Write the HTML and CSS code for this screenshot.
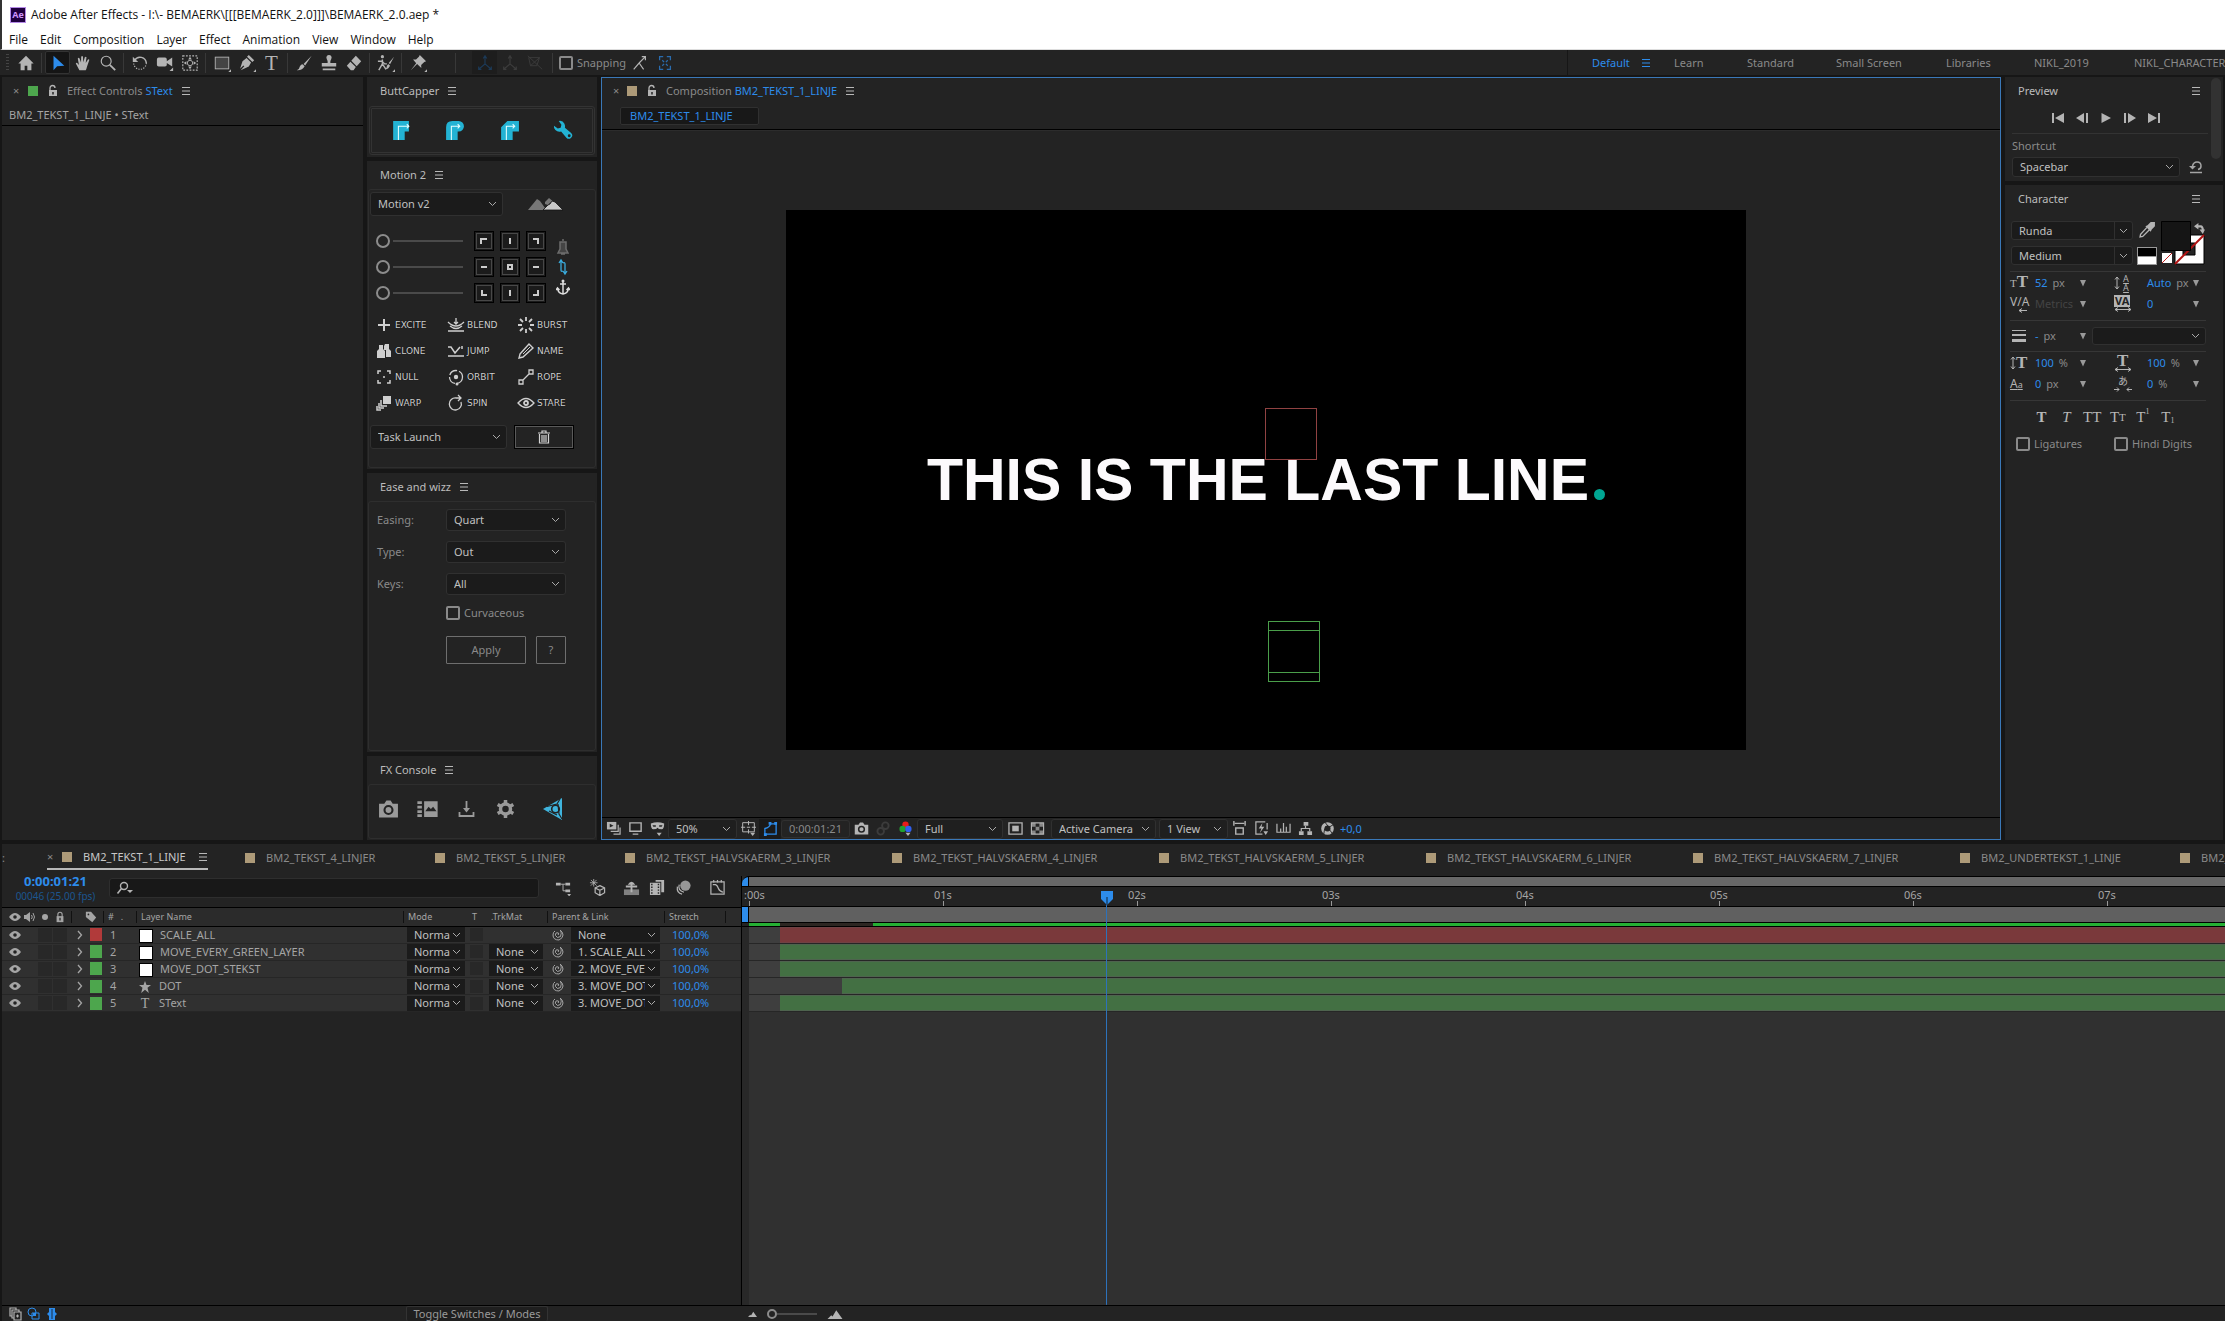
FILE: index.html
```html
<!DOCTYPE html>
<html lang="en">
<head>
<meta charset="utf-8">
<title>Adobe After Effects</title>
<link rel="stylesheet" href="styles.css">
</head>
<body>
<svg class="sprite" aria-hidden="true">
  <symbol id="menu" viewBox="0 0 10 10"><path d="M1 1.500h8M1 5h8M1 8.500h8" stroke="currentColor" stroke-width="1.200"/></symbol>
  <symbol id="home" viewBox="0 0 20 20"><path d="M10 2 1.500 10.500H4V18h4.500v-5h3v5H16v-7.500h2.500z" fill="currentColor"/></symbol>
  <symbol id="arrow" viewBox="0 0 20 20"><path d="M5 2v16l4-4.500 8-.5z" fill="currentColor"/></symbol>
  <symbol id="hand" viewBox="0 0 20 20"><path d="M6 18 2 10.500q.8-1.500 2.500.5l1 1.200L4.200 5q.8-1.600 2 0L7.800 9.500 8 3q1-1.700 2 0l.3 6.300L12 3.500q1.200-1.200 1.900.2L13 10l2.500-4q1.400-.8 1.500.7L14.500 14q-.5 2.500-1.500 4z" fill="currentColor"/></symbol>
  <symbol id="lens" viewBox="0 0 20 20"><circle cx="8" cy="8" r="5.500" fill="none" stroke="currentColor" stroke-width="1.300"/><path d="m12 12 6 6" stroke="currentColor" stroke-width="2"/></symbol>
  <symbol id="rotate" viewBox="0 0 20 20"><path d="M4 7A7 7 0 0 1 17 10" fill="none" stroke="currentColor" stroke-width="1.600"/><path d="M2 3v6h6z" fill="currentColor"/><path d="M17 10a7 7 0 0 1-14 0" fill="none" stroke="currentColor" stroke-width="1.300" stroke-dasharray="1.300 1.500"/></symbol>
  <symbol id="cam" viewBox="0 0 20 20"><path d="M1 6q0-2 2-2h7q2 0 2 2v2l6-4v10l-6-4v2q0 2-2 2H3q-2 0-2-2z" fill="currentColor"/><path d="M19 15v4h-4z" fill="currentColor"/></symbol>
  <symbol id="anchorpt" viewBox="0 0 20 20"><rect x="2" y="2" width="16" height="16" fill="none" stroke="currentColor" stroke-width="1.300" stroke-dasharray="2 1.500"/><circle cx="10" cy="10" r="3" fill="none" stroke="currentColor"/><path d="m10 3 2 3H8zM10 17l2-3H8zM3 10l3-2v4zM17 10l-3-2v4z" fill="currentColor"/></symbol>
  <symbol id="rect" viewBox="0 0 20 20"><rect x="2.500" y="3.500" width="15" height="13" fill="#444" stroke="currentColor"/><path d="M20 17v3h-3z" fill="currentColor"/></symbol>
  <symbol id="pen" viewBox="0 0 20 20"><path d="m12 1 6 6-2 2-6-6zM9.500 4.500l5 5L12 14 3 18l4-4.500-1-.800L2.300 16.500 5 8z" fill="currentColor"/><path d="M20 17v3h-3z" fill="currentColor"/></symbol>
  <symbol id="brush" viewBox="0 0 20 20"><path d="m18.500 2-9 9 1.800 1.800zM8.500 11.500l2.200 2.200Q8 18.500 2 18q3-1.500 3.500-4.500 1-2 3-2z" fill="currentColor"/></symbol>
  <symbol id="stamp" viewBox="0 0 20 20"><path d="M10 1a3 3 0 0 1 2.500 4.500Q11 8 11.500 10H18v4H2v-4h6.500Q9 8 7.500 5.500A3 3 0 0 1 10 1zM3 16h14v2H3z" fill="currentColor"/></symbol>
  <symbol id="eraser" viewBox="0 0 20 20"><path d="m12 2 6 6-5 5.500-6-6zM6 8.500l6 6L9.500 18h-3L2 13z" fill="currentColor"/></symbol>
  <symbol id="roto" viewBox="0 0 20 20"><circle cx="6" cy="3" r="1.800" fill="currentColor"/><path d="M1 8h4.500l3 3H11M6 6v5l-4 7M6 11l4 6" stroke="currentColor" stroke-width="1.600" fill="none"/><path d="m19 3-6 7 1.500 1.500zM12.500 11l2 2q-2 4-5 4 1.500-2 1.500-4z" fill="currentColor"/><path d="M20 17v3h-3z" fill="currentColor"/></symbol>
  <symbol id="pin" viewBox="0 0 20 20"><path d="m12 1 7 7-2 .8-3.500 3.500.2 3.200L9 11.200 2 18l6-7.800L4.500 6l3.300.2L11 3z" fill="currentColor"/><path d="M20 17v3h-3z" fill="currentColor"/></symbol>
  <symbol id="axis" viewBox="0 0 20 20"><path d="M10 3v8l-7 6M10 11l7 6M8 5l2-3 2 3M3 14v3h3M14 17h3v-3" fill="none" stroke="currentColor" stroke-width="1.300"/></symbol>
  <symbol id="axis2" viewBox="0 0 20 20"><path d="M3 4h12l-3 9H5zM2 2l16 15M5 13l10-9" fill="none" stroke="currentColor"/></symbol>
  <symbol id="snap" viewBox="0 0 20 20"><path d="m3 17 6-7 5 7M9 10l7-7M12 3h4v4" fill="none" stroke="currentColor" stroke-width="1.300"/></symbol>
  <symbol id="bounds" viewBox="0 0 20 20"><path d="M4 7V3h4M12 3h4v4M16 13v4h-4M8 17H4v-4M7 7l2 2M13 7l-2 2M7 13l2-2M13 13l-2-2" fill="none" stroke="currentColor" stroke-width="1.400"/></symbol>
  <symbol id="lock" viewBox="0 0 12 14"><path d="M3 7V4a2.500 2.500 0 0 1 5 0" fill="none" stroke="currentColor" stroke-width="1.300"/><path d="M2 6h8v6H2z" fill="currentColor"/><path d="M6 8v2.500" stroke="#232323" stroke-width="1.500"/></symbol>
  <symbol id="shut" viewBox="0 0 12 14"><path d="M3.500 7V4a2.500 2.500 0 0 1 5 0v3" fill="none" stroke="currentColor" stroke-width="1.300"/><path d="M2 6h8v7H2z" fill="currentColor"/><path d="M6 8v3" stroke="#232323" stroke-width="1.500"/></symbol>
  <symbol id="cap1" viewBox="0 0 20 20"><path d="M3 1h15v10h-4v8H3z" fill="#23b3d4"/><path d="M8 19V6h10M16 4l2 2-2 2" fill="none" stroke="#e8ffff"/></symbol>
  <symbol id="cap2" viewBox="0 0 20 20"><path d="M2 7q0-6 6-6h6a5 5 0 0 1 0 10h-1v8H2z" fill="#23b3d4"/><path d="M7 19V6h8M13 4l2 2-2 2" fill="none" stroke="#e8ffff"/></symbol>
  <symbol id="cap3" viewBox="0 0 20 20"><path d="M2 7l6-6h11v10h-6v8H2z" fill="#23b3d4"/><path d="M7 19V6h8M13 4l2 2-2 2" fill="none" stroke="#e8ffff"/></symbol>
  <symbol id="wrench" viewBox="0 0 22 22"><path d="M6 1q4-1 6 3 1 2.500.5 4l6.500 5.500a3.500 3.500 0 1 1-5 5L8.500 12Q5 13 2.500 10.500.5 8 1 6l4 3 3-1 .8-3z" fill="#23b3d4"/><circle cx="17" cy="16.500" r="1.500" fill="#232323"/></symbol>
  <symbol id="mount" viewBox="0 0 36 14"><path d="M1 13 10 2l3 2 5 7-1 2z" fill="#777"/><path d="M18 5l4-4 6 5-4-1-3 3-3-1z" fill="#777"/><path d="m16 13 5-5 2-1 2-3 3 1 8 8z" fill="#c8c8c8" stroke="#111" stroke-width=".8"/></symbol>
  <symbol id="bell" viewBox="0 0 14 18"><path d="M7 1v2M4 4h6v7l2 4H2l2-4zM5 16h4" fill="#444" stroke="#6c6c6c" stroke-width="1.500"/></symbol>
  <symbol id="swapv" viewBox="0 0 14 18"><path d="M5 3v9q0 2 2 1M9 15V6q0-2-2-1M3 5l2-3 2 3M7 13l2 3 2-3" fill="none" stroke="#3aabdc" stroke-width="1.300"/></symbol>
  <symbol id="anchor" viewBox="0 0 14 18"><path d="M7 2v14M4 6h6M1.500 10q.5 5.500 5.500 6 5-.5 5.500-6M0 12l1.500-2 2 2M10.500 12l2-2 1.500 2" fill="none" stroke="#ddd" stroke-width="1.500"/><circle cx="7" cy="3" r="1.500" fill="#ddd"/></symbol>
  <symbol id="p-plus" viewBox="0 0 18 18"><path d="M9 3v12M3 9h12" stroke="currentColor" stroke-width="2"/></symbol>
  <symbol id="p-clone" viewBox="0 0 18 18"><path d="M4 3h4v4l2 2v7H2V9l2-2zM10 2h4v5l2 2v6h-5V8H9V4z" fill="currentColor"/></symbol>
  <symbol id="p-null" viewBox="0 0 18 18"><path d="M3 6V3h3M12 3h3v3M15 12v3h-3M6 15H3v-3M8 9h2" fill="none" stroke="currentColor" stroke-width="1.500"/></symbol>
  <symbol id="p-warp" viewBox="0 0 18 18"><path d="M8 2h8v8H8z" fill="currentColor"/><path d="M6 6v6h6M4 9v5h5M2 12v4h4" fill="none" stroke="currentColor" stroke-width="1.500"/></symbol>
  <symbol id="p-blend" viewBox="0 0 18 18"><path d="M9 2v6M7 6l2 2 2-2M1 6q8 8 16 0M3 10q6 5 12 0M1 15h16" fill="none" stroke="currentColor" stroke-width="1.300"/></symbol>
  <symbol id="p-jump" viewBox="0 0 18 18"><path d="M1 5h3l4 6 5-6M1 14h16M15 4v3" fill="none" stroke="currentColor" stroke-width="1.500"/></symbol>
  <symbol id="p-orbit" viewBox="0 0 18 18"><circle cx="9" cy="9" r="6.500" fill="none" stroke="currentColor" stroke-dasharray="9 2" stroke-width="1.300"/><circle cx="9" cy="9" r="2.200" fill="currentColor"/><circle cx="10" cy="16" r="1.500" fill="currentColor"/></symbol>
  <symbol id="p-spin" viewBox="0 0 18 18"><path d="M14 8a6 6 0 1 1-5-4h5M11 1l3 3-3 3" fill="none" stroke="currentColor" stroke-width="1.300"/></symbol>
  <symbol id="p-burst" viewBox="0 0 18 18"><path d="M9 1v4M9 13v4M1 9h4M13 9h4M3 3l3 3M12 12l3 3M15 3l-3 3M6 12l-3 3" stroke="currentColor" stroke-width="1.800"/></symbol>
  <symbol id="p-name" viewBox="0 0 18 18"><path d="m3 12 9-10 4 4L6 15l-4 1z" fill="none" stroke="currentColor" stroke-width="1.400"/><path d="m6 12 7-7" stroke="currentColor"/></symbol>
  <symbol id="p-rope" viewBox="0 0 18 18"><path d="M2 12h4v4H2zM12 2h4v4h-4zM6 12l6-6" fill="none" stroke="currentColor" stroke-width="1.300"/></symbol>
  <symbol id="p-stare" viewBox="0 0 18 18"><path d="M1 9q8-9 16 0-8 9-16 0z" fill="none" stroke="currentColor" stroke-width="1.300"/><circle cx="9" cy="9" r="2" fill="none" stroke="currentColor" stroke-width="1.800"/></symbol>
  <symbol id="trash" viewBox="0 0 14 14"><path d="M1 3h12M5 2.500V1h4v1.500M2.500 4v9h9V4M5 5v7M7 5v7M9 5v7" fill="none" stroke="#d4d4d4" stroke-width="1.200"/></symbol>
  <symbol id="photo" viewBox="0 0 20 16"><path d="M1 3h5l2-3h4l2 3h5v13H1z" fill="currentColor"/><circle cx="10" cy="9" r="3.800" fill="none" stroke="#232323" stroke-width="2"/></symbol>
  <symbol id="film" viewBox="0 0 18 16"><path d="M6 1h12v14H6zM0 1h4v2.500H0zM0 5h4v2.500H0zM0 9h4v2.500H0zM0 12.700h4V15H0z" fill="currentColor"/><path d="m7 10 3-4 2 2 2-2 3 4z" fill="#232323"/></symbol>
  <symbol id="down" viewBox="0 0 18 18"><path d="M9 1v10M2 12v4h14v-4" fill="none" stroke="currentColor" stroke-width="1.800"/><path d="M5.500 8h7L9 12.500z" fill="currentColor"/></symbol>
  <symbol id="gear" viewBox="0 0 18 18"><circle cx="9" cy="9" r="5" fill="none" stroke="currentColor" stroke-width="3.500"/><path d="M9 0v4M9 14v4M1.200 4.500l3.500 2M13.300 11.500l3.500 2M16.800 4.500l-3.500 2M4.700 11.500l-3.500 2" stroke="currentColor" stroke-width="3.500"/></symbol>
  <symbol id="vc" viewBox="0 0 20 22"><path d="M0 11 19 0v22z" fill="#3fb4dd"/><path d="m4 8.500 10-2.500 3-5M15 6l1 10 3 5M14 17l-8-4" fill="none" stroke="#232323" stroke-width="1.200"/><circle cx="12.500" cy="11" r="3.800" fill="none" stroke="#232323" stroke-width="1.600"/></symbol>
  <symbol id="multi" viewBox="0 0 16 16"><path d="M1 1h10v8H1z" fill="currentColor"/><path d="m4 3 4 2-4 2z" fill="#232323"/><path d="M13 4v7H5M15 7v7H8" fill="none" stroke="currentColor" stroke-width="1.300"/></symbol>
  <symbol id="monitor" viewBox="0 0 16 16"><path d="M2 2h12v9H2zM5 14h6" fill="none" stroke="currentColor" stroke-width="1.500"/></symbol>
  <symbol id="mask" viewBox="0 0 18 18"><path d="M1 3q8-3 16 0 0 7-3 7-4 0-5-2-1 2-5 2-3 0-3-7z" fill="currentColor"/><path d="M3 5h4v2H4zM11 5h4l-1 2h-3z" fill="#232323"/><path d="M8 14h6l-3 4z" fill="currentColor"/></symbol>
  <symbol id="safe" viewBox="0 0 18 18"><path d="M2 2h14v11H2zM9 0v5M9 10v5M0 7.500h5M13 7.500h5M7 7.500h4" fill="none" stroke="currentColor" stroke-width="1.200"/><path d="M11 14h6l-3 4z" fill="currentColor"/></symbol>
  <symbol id="shape" viewBox="0 0 16 16"><path d="M2 14V8q5-1 6-5h6v11z" fill="none" stroke="currentColor" stroke-width="1.400"/><path d="M1 13h3v3H1zM12 1h3v3h-3zM6 1h3v3H6z" fill="currentColor"/></symbol>
  <symbol id="rgb" viewBox="0 0 16 18"><circle cx="8" cy="4.500" r="3.800" fill="#e81c1c"/><circle cx="4.500" cy="9.500" r="3.800" fill="#20a030"/><circle cx="11.500" cy="9.500" r="3.800" fill="#3060f0"/><path d="M8 14h6l-3 4z" fill="currentColor"/></symbol>
  <symbol id="ghost" viewBox="0 0 16 16"><circle cx="10" cy="5" r="3.500" fill="none" stroke="currentColor" stroke-width="2"/><circle cx="5" cy="11" r="3.500" fill="none" stroke="currentColor" stroke-width="2"/></symbol>
  <symbol id="roi" viewBox="0 0 16 16"><path d="M1 2h14v12H1z" fill="none" stroke="currentColor" stroke-width="1.400"/><path d="M4.500 5h7v6h-7z" fill="currentColor"/></symbol>
  <symbol id="check" viewBox="0 0 16 16"><path d="M1.500 2h13v12h-13z" fill="none" stroke="currentColor" stroke-width="1.200"/><path d="M2 2h4v4H2zM10 2h4v4h-4zM6 6h4v4H6zM2 10h4v4H2zM10 10h4v4h-4z" fill="currentColor" opacity=".7"/></symbol>
  <symbol id="par" viewBox="0 0 16 16"><path d="M2 0v5M14 0v5M3 2.500h10M4 7.500h8V14H4z" fill="none" stroke="currentColor" stroke-width="1.500"/></symbol>
  <symbol id="fast" viewBox="0 0 16 16"><path d="M12 1H2v13h7M14 2v7" fill="none" stroke="currentColor" stroke-width="1.300"/><path d="M9 2 5 8h3l-2 5 5-7H8zM10 11h5l-2.500 4z" fill="currentColor"/></symbol>
  <symbol id="tl" viewBox="0 0 16 16"><path d="M1 3v9h14V3M5 8v4M8 2v10M11 6v6" fill="none" stroke="currentColor" stroke-width="1.300"/></symbol>
  <symbol id="flow" viewBox="0 0 16 16"><path d="M6 1h5v4H6zM1 11h5v4H1zM10 11h5v4h-5z" fill="currentColor"/><path d="M8 5v3M3.500 11V8h9v3" fill="none" stroke="currentColor" stroke-width="1.300"/></symbol>
  <symbol id="expo" viewBox="0 0 16 16"><circle cx="8" cy="8" r="5" fill="none" stroke="currentColor" stroke-width="3.500"/><path d="m5 1 4 5M14 4l-5 3M13 13l-4-5M4 14l1-6" stroke="#232323"/></symbol>
  <symbol id="first" viewBox="0 0 12 10"><path d="M0 0h2v10H0zM12 0v10L3 5z" fill="currentColor"/></symbol>
  <symbol id="prev" viewBox="0 0 12 10"><path d="M8 0v10L0 5zM10 0h2v10h-2z" fill="currentColor"/></symbol>
  <symbol id="play" viewBox="0 0 12 10"><path d="M1.500 0v10L11 5z" fill="currentColor"/></symbol>
  <symbol id="next" viewBox="0 0 12 10"><path d="M4 0v10l8-5zM0 0h2v10H0z" fill="currentColor"/></symbol>
  <symbol id="last" viewBox="0 0 12 10"><path d="M10 0h2v10h-2zM0 0v10l9-5z" fill="currentColor"/></symbol>
  <symbol id="reset" viewBox="0 0 14 14"><path d="M3 6h4L3.500 9.500 0 6z" fill="currentColor"/><path d="M3.500 6q1-4 4.500-4 4 0 4 4 0 3-3 3.500M1 12.500h12" fill="none" stroke="currentColor" stroke-width="1.500"/></symbol>
  <symbol id="dropper" viewBox="0 0 16 16"><path d="m11 1 4 0 0 4-3 3-1 2-5-5 2-1z" fill="currentColor"/><path d="M7.500 6 1.500 12.500 1 15l2.500-.5L10 8" fill="none" stroke="currentColor" stroke-width="1.300"/></symbol>
  <symbol id="tri" viewBox="0 0 8 8"><path d="M1 1h6L4 7.500z" fill="currentColor"/></symbol>
  <symbol id="swap" viewBox="0 0 10 10"><path d="M3 3h3q2 0 2 4" fill="none" stroke="currentColor" stroke-width="2"/><path d="M4 0v6L0 3zM5 6h5l-2 4z" fill="currentColor"/></symbol>
  <symbol id="lines" viewBox="0 0 16 14"><path d="M1 1.500h14" stroke="currentColor"/><path d="M1 6h14" stroke="currentColor" stroke-width="2"/><path d="M1 11.500h14" stroke="currentColor" stroke-width="3"/></symbol>
  <symbol id="vspan" viewBox="0 0 6 14"><path d="M3 1v12M1 3.500 3 1l2 2.500M1 10.500 3 13l2-2.500" fill="none" stroke="currentColor"/></symbol>
  <symbol id="hspan" viewBox="0 0 18 5"><path d="M1 2.500h16M4 .5l-3 2 3 2M14 .5l3 2-3 2" fill="none" stroke="currentColor"/></symbol>
  <symbol id="hback" viewBox="0 0 18 5"><path d="M9 2.500h8M12 .5l-3 2 3 2" fill="none" stroke="currentColor"/></symbol>
  <symbol id="squeeze" viewBox="0 0 18 5"><path d="M0 2.500h5M3 .5l2 2-2 2M18 2.500h-5M15 .5l-2 2 2 2" fill="none" stroke="currentColor"/></symbol>
  <symbol id="search" viewBox="0 0 18 14"><circle cx="8" cy="5" r="3.500" fill="none" stroke="currentColor" stroke-width="1.400"/><path d="m5.500 7.500-4 5" stroke="currentColor" stroke-width="1.600"/><path d="M11 9h6l-3 3z" fill="currentColor"/></symbol>
  <symbol id="t-flow" viewBox="0 0 18 18"><path d="M1 4h5v3H1zM11 4h5v3h-5zM11 11h5v3h-5z" fill="currentColor"/><path d="M6 5.500h5M8.500 5.500v7h3" fill="none" stroke="currentColor"/><path d="M13 16h4l-2 2.500z" fill="currentColor"/></symbol>
  <symbol id="t-cube" viewBox="0 0 18 18"><path d="m11.500 7 5 2.500v5l-5 3-5-3v-5zM6.500 9.500l5 2.500 5-2.500M11.500 12v5" fill="none" stroke="currentColor" stroke-width="1.300"/><path d="M5 0v8M1 4h8M2 1l6 6M8 1 2 7" stroke="currentColor" stroke-width=".9"/></symbol>
  <symbol id="t-shy" viewBox="0 0 18 18"><path d="M1 11h16v6H1z" fill="currentColor" opacity=".65"/><path d="M5 6q4-6 8 0zM8 5h2v9H8zM3 7h12v2H3z" fill="currentColor"/></symbol>
  <symbol id="t-frame" viewBox="0 0 18 18"><path d="M1 4h11v13H1zM7 1h9v13h-3V3H7z" fill="currentColor"/><path d="M3 5v11M10 5v11" stroke="#232323" stroke-dasharray="1.500 1.500" stroke-width="1.500"/></symbol>
  <symbol id="t-blur" viewBox="0 0 18 18"><circle cx="11" cy="7" r="5.500" fill="currentColor" opacity=".8"/><path d="M4.500 6q-2 6 5 8M2.500 8q-1 7 5 8" fill="none" stroke="currentColor" stroke-width="1.300"/></symbol>
  <symbol id="t-graph" viewBox="0 0 18 18"><path d="M2 3h14v13H2zM5 1v3M9 1v3M13 1v3M4 6h3q2 1 3 4t5 4" fill="none" stroke="currentColor" stroke-width="1.300"/></symbol>
  <symbol id="eye" viewBox="0 0 12 10"><path d="M0 5q6-8 12 0-6 8-12 0z" fill="currentColor"/><circle cx="6" cy="5" r="1.800" fill="#222"/></symbol>
  <symbol id="speaker" viewBox="0 0 12 12"><path d="M0 4h2l4-3v10L2 8H0z" fill="currentColor"/><path d="M7.500 4q1.500 2 0 4M9 2q3 4 0 8" fill="none" stroke="currentColor"/></symbol>
  <symbol id="dot" viewBox="0 0 12 12"><circle cx="6" cy="6" r="3" fill="currentColor"/></symbol>
  <symbol id="tag" viewBox="0 0 14 14"><path d="M1 1h6l6 6.500L8.500 13 1 7z" fill="currentColor"/><circle cx="4" cy="4" r="1" fill="#232323"/></symbol>
  <symbol id="chev" viewBox="0 0 8 10"><path d="m2 1 3.500 4L2 9" fill="none" stroke="currentColor" stroke-width="1.300"/></symbol>
  <symbol id="star" viewBox="0 0 12 12"><path d="m6 0 1.500 4H12L8.500 6.800 9.800 12 6 8.800 2.200 12l1.300-5.200L0 4h4.500z" fill="currentColor"/></symbol>
  <symbol id="whip" viewBox="0 0 12 12"><path d="M6 6q1-1 .5-2Q3 3 3.500 6.500 5 10 8.500 7.500 10 4 8.500 1M8 1q3 2 3 5t-4 5Q1 11 1 6q0-3 2-4" fill="none" stroke="currentColor"/></symbol>
  <symbol id="f-copy" viewBox="0 0 14 14"><path d="M3 9H1V1h6v2M5 11H3V3h7v2M5 5h7v8H5zM7 9h3M8.500 7.500v3" fill="none" stroke="currentColor" stroke-width="1.200"/></symbol>
  <symbol id="f-mode" viewBox="0 0 14 14"><circle cx="5" cy="5" r="4" fill="none" stroke="currentColor"/><path d="M5 6h7v6H5z" fill="none" stroke="currentColor"/><path d="M6 6h3v3H6z" fill="currentColor"/></symbol>
  <symbol id="f-brace" viewBox="0 0 14 14"><path d="M4 1h6v4l2 2-2 2v4H4V9L2 7l2-2z" fill="currentColor"/><path d="M7 2v10" stroke="#1b2b40"/></symbol>
  <symbol id="hill" viewBox="0 0 12 8"><path d="M0 8l3-3 1 1 3-5 5 7z" fill="currentColor"/></symbol>
</svg>

<header class="chrome">
  <div class="title"><span class="logo">Ae</span><span>Adobe After Effects - I:\- BEMAERK\[[[BEMAERK_2.0]]]\BEMAERK_2.0.aep *</span></div>
  <nav class="menus"><a href="#">File</a><a href="#">Edit</a><a href="#">Composition</a><a href="#">Layer</a><a href="#">Effect</a><a href="#">Animation</a><a href="#">View</a><a href="#">Window</a><a href="#">Help</a></nav>
</header>

<div class="toolbar">
  <span class="grip"></span>
  <button class="tool" aria-label="Home"><svg><use href="#home"/></svg></button><i class="sep"></i>
  <button class="tool on" aria-label="Selection"><svg><use href="#arrow"/></svg></button>
  <button class="tool" aria-label="Hand"><svg><use href="#hand"/></svg></button>
  <button class="tool" aria-label="Zoom"><svg><use href="#lens"/></svg></button><i class="sep"></i>
  <button class="tool" aria-label="Rotate"><svg><use href="#rotate"/></svg></button>
  <button class="tool" aria-label="Camera"><svg><use href="#cam"/></svg></button>
  <button class="tool" aria-label="Pan behind"><svg><use href="#anchorpt"/></svg></button><i class="sep"></i>
  <button class="tool" aria-label="Rectangle"><svg><use href="#rect"/></svg></button>
  <button class="tool" aria-label="Pen"><svg><use href="#pen"/></svg></button>
  <button class="tool type">T</button><i class="sep"></i>
  <button class="tool" aria-label="Brush"><svg><use href="#brush"/></svg></button>
  <button class="tool" aria-label="Clone stamp"><svg><use href="#stamp"/></svg></button>
  <button class="tool" aria-label="Eraser"><svg><use href="#eraser"/></svg></button><i class="sep"></i>
  <button class="tool" aria-label="Roto brush"><svg><use href="#roto"/></svg></button><i class="sep"></i>
  <button class="tool" aria-label="Puppet pin"><svg><use href="#pin"/></svg></button><i class="sep wide"></i>
  <button class="tool dim blue" aria-label="Local axis"><svg><use href="#axis"/></svg></button>
  <button class="tool dim" aria-label="World axis"><svg><use href="#axis"/></svg></button>
  <button class="tool dim" aria-label="View axis"><svg><use href="#axis2"/></svg></button><i class="sep after"></i>
  <label class="tick"><input type="checkbox">Snapping</label>
  <button class="tool snap" aria-label="Snap edges"><svg><use href="#snap"/></svg></button>
  <button class="tool lit" aria-label="Snap bounds"><svg><use href="#bounds"/></svg></button>
  <nav class="spaces"><a href="#" class="cur">Default<svg class="mi"><use href="#menu"/></svg></a><a href="#">Learn</a><a href="#">Standard</a><a href="#">Small Screen</a><a href="#">Libraries</a><a href="#">NIKL_2019</a><a href="#">NIKL_CHARACTER</a></nav>
</div>

<main class="work">
  <section class="panel">
    <h2 class="head lead"><span class="x">×</span><i class="chip green"></i><svg class="lk"><use href="#lock"/></svg><span class="soft">Effect Controls</span><span class="blue">SText</span><svg class="mi"><use href="#menu"/></svg></h2>
    <p class="crumb">BM2_TEKST_1_LINJE • SText</p>
  </section>

  <div class="stack">
    <section class="panel">
      <h2 class="head">ButtCapper<svg class="mi"><use href="#menu"/></svg></h2>
      <div class="frame caps">
        <button aria-label="Flat cap"><svg><use href="#cap1"/></svg></button>
        <button aria-label="Round cap"><svg><use href="#cap2"/></svg></button>
        <button aria-label="Bevel cap"><svg><use href="#cap3"/></svg></button>
        <button aria-label="Settings"><svg><use href="#wrench"/></svg></button>
      </div>
    </section>
    <section class="panel">
      <h2 class="head">Motion 2<svg class="mi"><use href="#menu"/></svg></h2>
      <div class="frame motion">
        <div class="line"><select class="sel big" aria-label="Preset"><option>Motion v2</option></select><svg class="mount"><use href="#mount"/></svg></div>
        <div class="rig">
          <div class="sliders"><input type="range" value="0" aria-label="Ease in"><input type="range" value="0" aria-label="Ease both"><input type="range" value="0" aria-label="Ease out"></div>
          <div class="nine">
            <button aria-label="Top left"><svg viewBox="0 0 8 8"><path d="M1 7V2h6"/></svg></button><button aria-label="Top"><svg viewBox="0 0 8 8"><path d="M4 1v6"/></svg></button><button aria-label="Top right"><svg viewBox="0 0 8 8"><path d="M1 2h5v5"/></svg></button>
            <button aria-label="Left"><svg viewBox="0 0 8 8"><path d="M1 4h6"/></svg></button><button aria-label="Center"><svg viewBox="0 0 8 8"><path d="M2 2h4v4H2z"/></svg></button><button aria-label="Right"><svg viewBox="0 0 8 8"><path d="M1 4h6"/></svg></button>
            <button aria-label="Bottom left"><svg viewBox="0 0 8 8"><path d="M2 1v5h5"/></svg></button><button aria-label="Bottom"><svg viewBox="0 0 8 8"><path d="M4 1v6"/></svg></button><button aria-label="Bottom right"><svg viewBox="0 0 8 8"><path d="M1 6h5V1"/></svg></button>
          </div>
          <div class="side"><svg><use href="#bell"/></svg><svg><use href="#swapv"/></svg><svg><use href="#anchor"/></svg></div>
        </div>
        <div class="acts">
          <button><svg><use href="#p-plus"/></svg>EXCITE</button><button><svg><use href="#p-blend"/></svg>BLEND</button><button><svg><use href="#p-burst"/></svg>BURST</button>
          <button><svg><use href="#p-clone"/></svg>CLONE</button><button><svg><use href="#p-jump"/></svg>JUMP</button><button><svg><use href="#p-name"/></svg>NAME</button>
          <button><svg><use href="#p-null"/></svg>NULL</button><button><svg><use href="#p-orbit"/></svg>ORBIT</button><button><svg><use href="#p-rope"/></svg>ROPE</button>
          <button><svg><use href="#p-warp"/></svg>WARP</button><button><svg><use href="#p-spin"/></svg>SPIN</button><button><svg><use href="#p-stare"/></svg>STARE</button>
        </div>
        <div class="line"><select class="sel big" aria-label="Task"><option>Task Launch</option></select><button class="bin" aria-label="Delete"><svg><use href="#trash"/></svg></button></div>
      </div>
    </section>
    <section class="panel grow">
      <h2 class="head">Ease and wizz<svg class="mi"><use href="#menu"/></svg></h2>
      <div class="frame ease">
        <label for="easing">Easing:</label><select id="easing" class="sel"><option>Quart</option></select>
        <label for="type">Type:</label><select id="type" class="sel"><option>Out</option></select>
        <label for="keys">Keys:</label><select id="keys" class="sel"><option>All</option></select>
        <label class="tick second"><input type="checkbox">Curvaceous</label>
        <div class="second pair"><button class="btn">Apply</button><button class="btn">?</button></div>
      </div>
    </section>
    <section class="panel">
      <h2 class="head">FX Console<svg class="mi"><use href="#menu"/></svg></h2>
      <div class="frame fx">
        <button aria-label="Snapshot"><svg><use href="#photo"/></svg></button><button aria-label="Gallery"><svg><use href="#film"/></svg></button><button aria-label="Save"><svg><use href="#down"/></svg></button><button aria-label="Settings"><svg><use href="#gear"/></svg></button><button class="vc" aria-label="Video Copilot"><svg><use href="#vc"/></svg></button>
      </div>
    </section>
  </div>

  <section class="panel comp">
    <h2 class="head lead"><span class="x">×</span><i class="chip"></i><svg class="lk"><use href="#lock"/></svg><span class="soft">Composition</span><span class="blue">BM2_TEKST_1_LINJE</span><svg class="mi"><use href="#menu"/></svg></h2>
    <div class="flowbar"><a href="#">BM2_TEKST_1_LINJE</a></div>
    <div class="viewer">
      <div class="canvas">
        <p class="caption">THIS IS THE LAST LINE<i class="stop"></i></p>
        <i class="null red"></i><i class="null grn"></i><i class="null grn low"></i>
      </div>
    </div>
    <div class="viewbar">
      <button aria-label="Always preview"><svg><use href="#multi"/></svg></button>
      <button aria-label="Primary viewer"><svg><use href="#monitor"/></svg></button>
      <button aria-label="3D glasses"><svg><use href="#mask"/></svg></button>
      <select class="sel w70" aria-label="Magnification"><option>50%</option></select>
      <button aria-label="Grid and guides"><svg><use href="#safe"/></svg></button>
      <button class="blue" aria-label="Mask visibility"><svg><use href="#shape"/></svg></button>
      <span class="time">0:00:01:21</span>
      <button aria-label="Take snapshot"><svg><use href="#photo"/></svg></button>
      <button class="faint" aria-label="Show snapshot"><svg><use href="#ghost"/></svg></button>
      <button aria-label="Channels"><svg><use href="#rgb"/></svg></button>
      <select class="sel w86" aria-label="Resolution"><option>Full</option></select>
      <button aria-label="Region of interest"><svg><use href="#roi"/></svg></button>
      <button aria-label="Transparency grid"><svg><use href="#check"/></svg></button>
      <select class="sel w104" aria-label="3D view"><option>Active Camera</option></select>
      <select class="sel w70" aria-label="View layout"><option>1 View</option></select>
      <button aria-label="Pixel aspect"><svg><use href="#par"/></svg></button>
      <button aria-label="Fast previews"><svg><use href="#fast"/></svg></button>
      <button aria-label="Timeline"><svg><use href="#tl"/></svg></button>
      <button aria-label="Flowchart"><svg><use href="#flow"/></svg></button>
      <button aria-label="Reset exposure"><svg><use href="#expo"/></svg></button>
      <span class="blue">+0,0</span>
    </div>
  </section>

  <div class="stack">
    <section class="panel preview">
      <h2 class="head">Preview<svg class="mi"><use href="#menu"/></svg></h2>
      <div class="transport"><button aria-label="First frame"><svg><use href="#first"/></svg></button><button aria-label="Previous frame"><svg><use href="#prev"/></svg></button><button aria-label="Play"><svg><use href="#play"/></svg></button><button aria-label="Next frame"><svg><use href="#next"/></svg></button><button aria-label="Last frame"><svg><use href="#last"/></svg></button></div>
      <label class="soft" for="shortcut">Shortcut</label>
      <div class="short"><select id="shortcut" class="sel"><option>Spacebar</option></select><button aria-label="Reset"><svg><use href="#reset"/></svg></button></div>
      <i class="scroll"></i>
    </section>
    <section class="panel grow char">
      <h2 class="head">Character<svg class="mi"><use href="#menu"/></svg></h2>
      <div class="fonts">
        <div class="faces"><select class="sel split" aria-label="Font family"><option>Runda</option></select><select class="sel split" aria-label="Font style"><option>Medium</option></select></div>
        <div class="picks"><svg class="drop"><use href="#dropper"/></svg><i class="bw"></i></div>
        <div class="colors">
          <svg viewBox="0 0 44 44"><path d="M14 14h29v29H14z" fill="#fff" stroke="#000"/><path d="M22 22h12v12H22z" fill="#232323" stroke="#000"/><path d="m14 43 29-29" stroke="#b01414" stroke-width="2"/><path d="M.5.500h29v29H.5z" fill="#151515" stroke="#000"/><path d="M1 32h10v10H1z" fill="#fff"/><path d="m1 42 10-10" stroke="#c02020"/></svg>
          <svg class="swap"><use href="#swap"/></svg>
        </div>
      </div>
      <div class="props">
        <span class="gl"><small>T</small><b>T</b></span><span><a href="#">52</a> px</span><svg class="tri"><use href="#tri"/></svg>
        <span class="gl lead-ic"><svg class="vs"><use href="#vspan"/></svg><span class="aa"><u>A</u><u>A</u></span></span><span><a href="#">Auto</a> px</span><svg class="tri"><use href="#tri"/></svg>
        <span class="gl sans">V/A<svg class="hs"><use href="#hback"/></svg></span><span class="off">Metrics</span><svg class="tri"><use href="#tri"/></svg>
        <span class="gl sans inv"><em>VA</em><svg class="hs"><use href="#hspan"/></svg></span><span><a href="#">0</a></span><svg class="tri"><use href="#tri"/></svg>
      </div>
      <div class="props stroke">
        <svg class="ln"><use href="#lines"/></svg><span><a href="#">-</a> px</span><svg class="tri"><use href="#tri"/></svg><select class="sel" aria-label="Stroke order"><option></option></select>
      </div>
      <div class="props">
        <span class="gl"><svg class="vs"><use href="#vspan"/></svg><b>T</b></span><span><a href="#">100</a> %</span><svg class="tri"><use href="#tri"/></svg>
        <span class="gl tall"><b>T</b><svg class="hs"><use href="#hspan"/></svg></span><span><a href="#">100</a> %</span><svg class="tri"><use href="#tri"/></svg>
        <span class="gl sans"><u>A</u><sup>a</sup></span><span><a href="#">0</a> px</span><svg class="tri"><use href="#tri"/></svg>
        <span class="gl jp">あ<svg class="hs"><use href="#squeeze"/></svg></span><span><a href="#">0</a> %</span><svg class="tri"><use href="#tri"/></svg>
      </div>
      <div class="styles"><button><b>T</b></button><button><i>T</i></button><button>TT</button><button>T<small>T</small></button><button>T<sup>1</sup></button><button>T<sub>1</sub></button></div>
      <div class="ticks"><label class="tick"><input type="checkbox">Ligatures</label><label class="tick"><input type="checkbox">Hindi Digits</label></div>
    </section>
  </div>
</main>

<section class="timeline">
  <nav class="tabs">
    <span class="prior">:</span>
    <a href="#" class="cur"><span class="x">×</span><i class="chip"></i>BM2_TEKST_1_LINJE<svg class="mi"><use href="#menu"/></svg></a>
    <a href="#" class="t1"><i class="chip"></i>BM2_TEKST_4_LINJER</a>
    <a href="#" class="t1"><i class="chip"></i>BM2_TEKST_5_LINJER</a>
    <a href="#" class="t2"><i class="chip"></i>BM2_TEKST_HALVSKAERM_3_LINJER</a>
    <a href="#" class="t2"><i class="chip"></i>BM2_TEKST_HALVSKAERM_4_LINJER</a>
    <a href="#" class="t2"><i class="chip"></i>BM2_TEKST_HALVSKAERM_5_LINJER</a>
    <a href="#" class="t2"><i class="chip"></i>BM2_TEKST_HALVSKAERM_6_LINJER</a>
    <a href="#" class="t2"><i class="chip"></i>BM2_TEKST_HALVSKAERM_7_LINJER</a>
    <a href="#" class="t3"><i class="chip"></i>BM2_UNDERTEKST_1_LINJE</a>
    <a href="#"><i class="chip"></i>BM2_UNDERTEKST_2_LINJER</a>
  </nav>
  <div class="split-view">
    <div class="layers">
      <div class="ctl">
        <div class="clock"><b>0:00:01:21</b><span>00046 (25.00 fps)</span></div>
        <label class="find"><svg><use href="#search"/></svg><input type="text" aria-label="Search layers"></label>
        <div class="sw"><button aria-label="Mini-flowchart"><svg><use href="#t-flow"/></svg></button><button aria-label="Draft 3D"><svg><use href="#t-cube"/></svg></button><button aria-label="Hide shy layers"><svg><use href="#t-shy"/></svg></button><button aria-label="Frame blending"><svg><use href="#t-frame"/></svg></button><button aria-label="Motion blur"><svg><use href="#t-blur"/></svg></button><button aria-label="Graph editor"><svg><use href="#t-graph"/></svg></button></div>
      </div>
      <table>
        <colgroup><col class="c-av"><col class="c-lab"><col class="c-num"><col class="c-name"><col class="c-mode"><col class="c-t"><col class="c-trk"><col class="c-par"><col class="c-str"><col></colgroup>
        <thead><tr><th><span class="av"><svg><use href="#eye"/></svg><svg><use href="#speaker"/></svg><svg><use href="#dot"/></svg><svg><use href="#shut"/></svg></span></th><th class="bar"><svg class="tag"><use href="#tag"/></svg></th><th class="bar num"># &nbsp; .</th><th class="bar">Layer Name</th><th class="bar">Mode</th><th>T</th><th>.TrkMat</th><th class="bar">Parent &amp; Link</th><th class="bar">Stretch</th><th class="bar"></th></tr></thead>
        <tbody>
          <tr><td><span class="av"><svg><use href="#eye"/></svg><i></i><i></i><i></i></span></td><td><span class="lab"><svg><use href="#chev"/></svg><i class="r"></i></span></td><td class="num">1</td><td class="name"><i class="box"></i>SCALE_ALL</td><td><select class="sel" aria-label="Mode"><option>Normal</option></select></td><td><i class="pt"></i></td><td></td><td><span class="par"><svg><use href="#whip"/></svg><select class="sel" aria-label="Parent"><option>None</option></select></span></td><td class="blue">100,0%</td><td></td></tr>
          <tr><td><span class="av"><svg><use href="#eye"/></svg><i></i><i></i><i></i></span></td><td><span class="lab"><svg><use href="#chev"/></svg><i></i></span></td><td class="num">2</td><td class="name"><i class="box"></i>MOVE_EVERY_GREEN_LAYER</td><td><select class="sel" aria-label="Mode"><option>Normal</option></select></td><td><i class="pt"></i></td><td><select class="sel" aria-label="Track matte"><option>None</option></select></td><td><span class="par"><svg><use href="#whip"/></svg><select class="sel" aria-label="Parent"><option>1. SCALE_ALL</option></select></span></td><td class="blue">100,0%</td><td></td></tr>
          <tr><td><span class="av"><svg><use href="#eye"/></svg><i></i><i></i><i></i></span></td><td><span class="lab"><svg><use href="#chev"/></svg><i></i></span></td><td class="num">3</td><td class="name"><i class="box"></i>MOVE_DOT_STEKST</td><td><select class="sel" aria-label="Mode"><option>Normal</option></select></td><td><i class="pt"></i></td><td><select class="sel" aria-label="Track matte"><option>None</option></select></td><td><span class="par"><svg><use href="#whip"/></svg><select class="sel" aria-label="Parent"><option>2. MOVE_EVERY_GREEN_LAYER</option></select></span></td><td class="blue">100,0%</td><td></td></tr>
          <tr><td><span class="av"><svg><use href="#eye"/></svg><i></i><i></i><i></i></span></td><td><span class="lab"><svg><use href="#chev"/></svg><i></i></span></td><td class="num">4</td><td class="name"><svg><use href="#star"/></svg>DOT</td><td><select class="sel" aria-label="Mode"><option>Normal</option></select></td><td><i class="pt"></i></td><td><select class="sel" aria-label="Track matte"><option>None</option></select></td><td><span class="par"><svg><use href="#whip"/></svg><select class="sel" aria-label="Parent"><option>3. MOVE_DOT_STEKST</option></select></span></td><td class="blue">100,0%</td><td></td></tr>
          <tr><td><span class="av"><svg><use href="#eye"/></svg><i></i><i></i><i></i></span></td><td><span class="lab"><svg><use href="#chev"/></svg><i></i></span></td><td class="num">5</td><td class="name"><span class="ty">T</span>SText</td><td><select class="sel" aria-label="Mode"><option>Normal</option></select></td><td><i class="pt"></i></td><td><select class="sel" aria-label="Track matte"><option>None</option></select></td><td><span class="par"><svg><use href="#whip"/></svg><select class="sel" aria-label="Parent"><option>3. MOVE_DOT_STEKST</option></select></span></td><td class="blue">100,0%</td><td></td></tr>
        </tbody>
      </table>
    </div>
    <div class="graph">
      <div class="navi"></div>
      <div class="ruler"><span class="zero">:00s</span><span>01s</span><span>02s</span><span>03s</span><span>04s</span><span>05s</span><span>06s</span><span>07s</span></div>
      <div class="area"></div>
      <div class="cache"><i style="--frames:4"></i><i class="gap" style="--frames:12"></i><i class="rest"></i></div>
      <div class="tracks">
        <div class="track"><i class="r" style="--start:4"></i></div>
        <div class="track"><i style="--start:4"></i></div>
        <div class="track"><i style="--start:4"></i></div>
        <div class="track"><i style="--start:12"></i></div>
        <div class="track"><i style="--start:4"></i></div>
      </div>
      <div class="cti" style="--start:46"><svg viewBox="0 0 12 14"><path d="M0 0h12v8l-6 6-6-6z" fill="#2d8ceb"/><path d="M6 6v8" stroke="#123"/></svg></div>
    </div>
  </div>
  <footer class="foot">
    <div class="fl"><button aria-label="Layer switches"><svg><use href="#f-copy"/></svg></button><button class="blue" aria-label="Transfer controls"><svg><use href="#f-mode"/></svg></button><button class="blue" aria-label="In and out"><svg><use href="#f-brace"/></svg></button></div>
    <button class="toggle">Toggle Switches / Modes</button>
    <div class="zoom"><svg class="s"><use href="#hill"/></svg><input type="range" value="0" aria-label="Timeline zoom"><svg class="l"><use href="#hill"/></svg></div>
  </footer>
</section>
</body>
</html>
```
FILE: styles.css
```css
* { box-sizing: border-box; }
body {
  margin: 0;
  min-height: 100vh;
  display: grid;
  grid-template-columns: minmax(0, 1fr);
  grid-template-rows: auto auto minmax(auto, 27fr) minmax(auto, 17fr);
  background: #161616;
  color: #a5a5a5;
  font: 11px/16px "Noto Sans", "Noto Sans CJK JP", sans-serif;
  overflow-x: hidden;
}
.sprite { position: absolute; width: 0; height: 0; }
a { color: inherit; text-decoration: none; }
button { padding: 0; border: 0; background: none; color: inherit; font: inherit; display: flex; align-items: center; justify-content: center; }
svg { display: block; flex: none; }
.blue { color: #2d8ceb; }
.soft { color: #8a8a8a; }
.mi { width: 10px; height: 10px; color: #b8b8b8; }
.chip { width: 10px; height: 10px; background: #ad9a78; flex: none; }
.chip.green { background: #4da64d; }
.x { color: #8a8a8a; width: 8px; }

/* window title and menus */
.chrome { background: #fff; color: #111; font: 12px/20px "Open Sans", sans-serif; padding-left: 8px; height: 50px; border-bottom: 1px solid #ddd; border-left: 2px solid #333; }
.title { display: flex; align-items: center; gap: 5px; height: 29px; }
.logo { width: 16px; height: 16px; background: #1f0040; border: 1px solid #b58ae8; color: #cf96fd; font: bold 9px/13px "Open Sans", sans-serif; text-align: center; }
.menus { display: flex; gap: 12px; margin-left: -1px; height: 20px; line-height: 22px; }

/* tools */
.toolbar { display: flex; align-items: center; height: 27px; background: #232323; padding-left: 6px; border-bottom: 2px solid #161616; overflow: hidden; }
.grip { width: 3px; height: 18px; margin-right: 4px; background: repeating-linear-gradient(#444 0 1px, #232323 1px 3px); }
.tool { width: 25px; height: 23px; color: #b4b4b4; flex: none; }
.tool svg { width: 18px; height: 18px; }
.tool.on { background: #151515; border: 1px solid #333; border-radius: 2px; color: #2d8ceb; }
.type { font: 21px/20px "Liberation Serif", serif; }
.sep { width: 1px; height: 20px; margin: 0 3px; background: #383838; flex: none; }
.sep.wide { margin: 0 16px 0 25px; }
.sep.after { margin: 0 6px 0 5px; }
.tool.dim { color: #3c3c3c; }
.tool.dim.blue { color: #1c3a58; background: #1d1d1d; }
.tool.snap { margin-left: 2px; }
.tool.lit { color: #2a6cae; }
.tick { display: flex; align-items: center; gap: 4px; color: #8a8a8a; white-space: nowrap; }
.tick input { appearance: none; width: 14px; height: 14px; margin: 0; border: 2px solid #8a8a8a; border-radius: 2px; }
.spaces { margin-left: auto; flex: 0 0 658px; height: 25px; padding-left: 24px; border-left: 1px solid #161616; display: grid; grid-template-columns: 82px 73px 89px 110px 88px 100px 110px; align-items: center; overflow: hidden; color: #8a8a8a; }
.spaces .cur { color: #2d8ceb; display: flex; gap: 11px; align-items: center; }
.spaces .mi { color: #2d8ceb; }

/* panels */
.work { display: grid; grid-template-columns: 361px 230px minmax(0, 1fr) 218px; gap: 4px; padding: 0 2px; }
.stack { display: flex; flex-direction: column; gap: 4px; min-width: 0; }
.panel { background: #232323; display: flex; flex-direction: column; min-width: 0; }
.grow { flex: 1; }
.head { margin: 0; height: 28px; padding: 0 13px; display: flex; align-items: center; gap: 8px; font: inherit; color: #bcbcbc; flex: none; }
.lead { gap: 0; padding-left: 11px; }
.lead .chip { margin-left: 7px; }
.comp .lead .chip { margin-left: 6px; }
.lk { width: 14px; height: 14px; margin: 0 7px 0 8px; color: #b4b4b4; }
.lead .blue { margin: 0 8px 0 3px; }
.crumb { margin: 0; padding: 2px 7px; height: 21px; border-bottom: 1px solid #000; }
.frame { flex: 1; margin: 0 1px 1px; border: 1px solid #2e2e2e; border-radius: 3px; }
.frame.caps { flex: none; margin: 1px 2px 2px; height: 49px; display: flex; align-items: center; justify-content: space-between; padding: 0 18px; border: 3px double #333; }
.caps svg { width: 21px; height: 21px; }

.sel { appearance: none; min-width: 0; height: 22px; margin: 0; padding: 0 18px 0 7px; border: 1px solid #303030; border-radius: 3px; color: #c0c0c0; font: inherit; background: #1b1b1b url("data:image/svg+xml,%3Csvg xmlns='http://www.w3.org/2000/svg' width='9' height='6'%3E%3Cpath d='M1 1l3.500 3.500L8 1' fill='none' stroke='%23aaa'/%3E%3C/svg%3E") no-repeat right 5px center; }

.motion { padding: 2px 19px 18px 1px; }
.line { display: flex; align-items: center; gap: 7px; }
.line .big { height: 24px; width: 137px; }
.line:first-child .big { width: 133px; }
.mount { width: 36px; height: 14px; margin-left: 17px; }
.rig { display: flex; margin: 15px 0 0 6px; }
.sliders { display: grid; gap: 12px; padding: 3px 0; margin-right: 11px; }
input[type=range] { appearance: none; width: 87px; height: 14px; margin: 0; background: linear-gradient(#4a4a4a, #4a4a4a) right center / 70px 2px no-repeat; }
input[type=range]::-webkit-slider-thumb { appearance: none; width: 14px; height: 14px; border: 2px solid #8c8c8c; border-radius: 50%; background: #232323; }
.nine { display: grid; grid-template-columns: repeat(3, 20px); grid-auto-rows: 20px; gap: 6px; }
.nine button { border: 1px solid #000; outline: 1px solid #484848; outline-offset: -3px; background: #1b1b1b; }
.nine svg { width: 8px; height: 8px; fill: none; stroke: #ccc; stroke-width: 2; }
.side { margin-left: 10px; padding-top: 7px; display: grid; gap: 2px; align-content: start; }
.side svg { width: 14px; height: 18px; }
.acts { display: grid; grid-template-columns: 72px 70px 56px; row-gap: 8px; padding: 13px 0 13px 5px; }
.acts button { justify-content: flex-start; height: 18px; gap: 2px; color: #cfcfcf; font: 9px/12px "DejaVu Sans", sans-serif; text-shadow: 0 0 1px #000; }
.acts svg { width: 18px; height: 18px; }
.bin { width: 60px; height: 24px; border: 1px solid #000; outline: 1px solid #5a5a5a; outline-offset: -2px; }
.bin svg { width: 14px; height: 14px; }

.ease { display: grid; grid-template-columns: 69px 120px; row-gap: 10px; align-content: start; align-items: center; padding: 7px 8px; color: #8a8a8a; }
.ease .second { grid-column: 2; }
.ease .pair { display: flex; gap: 10px; margin-top: 5px; }
.btn { height: 28px; width: 30px; border: 1px solid #6e6e6e; border-radius: 1px; }
.btn:first-child { width: 80px; }

.frame.fx { height: 55px; display: flex; align-items: center; gap: 18px; padding: 0 9px 6px; color: #9a9a9a; flex: none; }
.fx svg { width: 21px; height: 18px; }
.fx .vc { margin-left: 9px; }
.fx .vc svg { height: 22px; width: 20px; }

/* composition viewer */
.comp { border: 1px solid #3a78b8; }
.comp .head { height: 26px; }
.flowbar { padding: 3px 18px 5px; border-bottom: 1px solid #000; height: 26px; }
.flowbar a { display: block; width: 139px; height: 18px; padding-left: 9px; border: 1px solid #303030; border-radius: 2px; background: #181818; color: #2d8ceb; }
.viewer { flex: 1; display: flex; align-items: center; justify-content: center; padding: 12px 70px 0 0; border-top: 1px solid #2c2c2c; overflow: hidden; }
.canvas { position: relative; width: 960px; aspect-ratio: 16 / 9; background: #000; display: flex; align-items: center; justify-content: center; flex: none; }
.caption { margin: 0; display: flex; align-items: baseline; gap: 5px; color: #fcfafc; font: bold 59px/64px "Liberation Sans", sans-serif; white-space: nowrap; }
.stop { width: 11px; height: 11px; border-radius: 50%; background: #00a693; }
.null { position: absolute; width: 52px; height: 52px; border: 1px solid #4a9e4a; left: 482px; top: 411px; }
.null.low { top: 420px; }
.null.red { border-color: #904242; left: 479px; top: 198px; }
.viewbar { height: 22px; display: flex; align-items: center; border-top: 1px solid #000; color: #b4b4b4; overflow: hidden; }
.viewbar button { width: 22px; height: 20px; flex: none; }
.viewbar svg { width: 15px; height: 15px; }
.viewbar .sel { height: 20px; flex: none; background-color: #1f1f1f; }
.w70 { width: 69px; }
.w86 { width: 86px; margin: 0 1px; }
.w104 { width: 105px; }
.viewbar .w104 { margin: 0 3px; }
.viewbar .faint { color: #3c3c3c; }
.viewbar button.blue { color: #2d8ceb; background: #1a1a1a; }
.time { width: 69px; text-align: center; border: 1px solid #303030; border-radius: 3px; color: #8a8a8a; }
.viewbar span.blue { margin-left: 2px; }

/* preview and character */
.preview { position: relative; height: 104px; padding-left: 7px; }
.preview .head, .char .head { justify-content: space-between; }
.preview .head { padding: 0 22px 0 6px; }
.transport { display: flex; justify-content: space-between; width: 196px; padding: 0 48px 2px 40px; height: 29px; align-items: center; border-bottom: 1px solid #333; color: #b4b4b4; }
.transport svg { width: 12px; height: 10px; }
.preview label { line-height: 16px; margin-top: 4px; }
.short { display: flex; gap: 9px; padding-top: 3px; }
.short .sel { width: 168px; height: 20px; }
.short svg { width: 14px; height: 14px; }
.scroll { position: absolute; right: 2px; top: 1px; width: 10px; height: 81px; border-radius: 5px; background: #323232; }
.char { padding: 0 17px 0 5px; color: #b4b4b4; }
.char .head { padding: 0 5px 0 8px; }
.fonts { display: flex; padding: 8px 0 6px 1px; border-bottom: 1px solid #363636; }
.faces { display: grid; gap: 6px; width: 122px; flex: none; }
.faces .sel { height: 19px; }
.split { background-image: linear-gradient(#303030, #303030), url("data:image/svg+xml,%3Csvg xmlns='http://www.w3.org/2000/svg' width='9' height='6'%3E%3Cpath d='M1 1l3.500 3.500L8 1' fill='none' stroke='%23aaa'/%3E%3C/svg%3E"); background-size: 1px 100%, 9px 6px; background-position: right 17px center, right 4px center; background-repeat: no-repeat; }
.picks { display: grid; justify-items: center; align-content: space-between; width: 28px; }
.drop { width: 17px; height: 17px; }
.bw { width: 20px; height: 18px; border: 1px solid #999; background: linear-gradient(#000 8px, #999 8px 9px, #fff 9px); }
.colors { display: flex; position: relative; }
.colors svg { width: 44px; height: 44px; }
.colors svg.swap { position: absolute; right: 0; top: 2px; width: 11px; height: 11px; }
.props { display: grid; grid-template-columns: 25px 44px 35px 33px 45px 10px; grid-auto-rows: 21px; padding: 0 0 6px; align-items: center; border-bottom: 1px solid #363636; white-space: nowrap; }
.props a { color: #2d8ceb; margin-right: 2px; }
.props > span { color: #8a8a8a; }
.props .off { color: #444; }
.tri { width: 8px; height: 8px; color: #9a9a9a; }
.props > .gl { display: flex; flex-wrap: wrap; align-items: baseline; color: #b4b4b4; font: 17px/16px "Liberation Serif", serif; width: 22px; }
.gl small { font-size: 11px; }
.gl .vs { width: 6px; height: 14px; align-self: center; }
.gl .hs { width: 18px; height: 5px; }
.props > .sans { font: 12px/13px "Noto Sans", sans-serif; }
.sans sup { font-size: 9px; line-height: 8px; vertical-align: top; text-decoration: underline; }
.inv em { font: bold 11px/12px "Noto Sans", sans-serif; background: #b4b4b4; color: #232323; padding: 0 1px; }
.aa { display: grid; font: 9px/9px "Noto Sans", sans-serif; }
.aa u { text-align: center; width: 12px; }
.props > .tall { line-height: 13px; padding-left: 3px; }
.tall .hs { margin-left: -3px; }
.props > .jp { font: 10px/12px "Noto Sans CJK JP", sans-serif; padding-left: 4px; }
.jp .hs { margin-left: -4px; }
.props.stroke { grid-template-columns: 25px 44px 13px 114px; padding: 4px 0 5px; }
.stroke .sel { height: 18px; }
.ln { width: 16px; height: 14px; margin-left: 1px; }
.styles { display: flex; gap: 8px; padding: 7px 23px 0; font: 15px/16px "Liberation Serif", serif; color: #b8b8b8; }
.styles button { min-width: 17px; height: 17px; font: inherit; }
.styles small { font-size: 11px; }
.styles sup, .styles sub { font-size: 8px; line-height: 8px; }
.styles sup { align-self: flex-start; }
.styles sub { align-self: flex-end; }
.ticks { display: grid; grid-template-columns: 98px 1fr; padding: 11px 0 0 6px; }

/* timeline */
.timeline { margin: 4px 0 0 2px; background: #232323; display: flex; flex-direction: column; min-width: 0; }
.tabs { display: flex; height: 32px; padding: 2px 0 0; color: #8a8a8a; overflow: hidden; }
.prior { width: 45px; line-height: 24px; flex: none; }
.tabs a { display: flex; align-items: center; gap: 11px; height: 24px; white-space: nowrap; flex: none; }
.tabs .cur { width: 161px; margin-right: 37px; border-bottom: 2px solid #b8b8b8; color: #c8c8c8; }
.tabs .cur .x { margin-right: -4px; }
.tabs .cur .mi { margin-left: auto; }
.t1 { width: 190px; }
.t2 { width: 267px; }
.t3 { width: 220px; }
.split-view { flex: 1; display: grid; grid-template-columns: 740px minmax(0, 1fr); border-bottom: 1px solid #000; }
.layers { border-right: 1px solid #000; }
.ctl { display: flex; align-items: center; height: 32px; border-bottom: 1px solid #000; padding-bottom: 8px; }
.clock { width: 107px; text-align: center; color: #2d8ceb; padding-top: 2px; }
.clock b { display: block; font: bold 13px/15px "Noto Sans", sans-serif; }
.clock span { display: block; font-size: 10px; line-height: 14px; color: #1c568f; }
.find { width: 430px; height: 20px; display: flex; align-items: center; background: #181818; border: 1px solid #2e2e2e; border-radius: 3px; padding-left: 6px; color: #b4b4b4; }
.find svg { width: 18px; height: 14px; }
.find input { flex: 1; background: none; border: 0; outline: 0; color: inherit; font: inherit; }
.sw { display: flex; padding-left: 7px; color: #b4b4b4; }
.sw button { width: 26px; }
.sw button:nth-child(-n+2) { width: 34px; }
.sw button:nth-child(3) { margin-left: 4px; }
.sw button:last-child { width: 42px; }
.sw svg { width: 17px; height: 17px; }
table { table-layout: fixed; width: 100%; border-collapse: collapse; }
.c-av { width: 69px; } .c-lab { width: 32px; } .c-num { width: 33px; } .c-name { width: 267px; } .c-mode { width: 64px; }
.c-t { width: 19px; } .c-trk { width: 61px; } .c-par { width: 117px; } .c-str { width: 61px; }
th, td { padding: 0; height: 17px; text-align: left; font-weight: normal; white-space: nowrap; }
th { height: 18px; background: #2b2b2b; font-size: 9px; line-height: 12px; color: #a5a5a5; border-bottom: 1px solid #000; padding-left: 5px; }
th:first-child { padding-left: 0; }
th.bar { background-image: linear-gradient(#111, #111); background-size: 1px 12px; background-position: left center; background-repeat: no-repeat; }
tbody tr { background: #303030; }
td { border-bottom: 1px solid #262626; line-height: 16px; }
.av { display: flex; padding-left: 6px; gap: 1px; align-items: center; }
.av svg { width: 14px; height: 12px; padding: 0 1px; }
.av i { width: 14px; height: 14px; background: #282828; }
.av i:nth-of-type(1) { background: none; }
.tag { width: 14px; height: 12px; margin-left: 8px; }
.lab { display: flex; align-items: center; gap: 6px; padding-left: 5px; }
.lab svg { width: 8px; height: 10px; }
.lab i { width: 12px; height: 13px; background: #4da64d; }
.lab .r { background: #b13a3a; }
td.num { padding-left: 7px; }
.name svg, .name .box, .ty { display: inline-block; vertical-align: middle; width: 12px; height: 12px; margin: 0 8px 0 3px; text-align: center; }
.name .box { background: #fff; border: 1px solid #000; width: 14px; height: 14px; margin-right: 7px; }
.ty { font: 14px/12px "Liberation Serif", serif; }
td .sel { display: block; height: 15px; line-height: 14px; border: 0; border-radius: 0; width: 58px; margin-left: 4px; padding: 0 15px 0 7px; background-position: right 4px center; }
td:nth-child(7) .sel { width: 54px; margin-left: 3px; }
.pt { display: block; width: 13px; height: 13px; margin-left: 3px; background: #282828; }
.par { display: flex; align-items: center; padding-left: 5px; }
.par svg { width: 12px; height: 12px; }
td .par .sel { width: 89px; margin-left: 7px; }
td.blue { padding-left: 8px; }

.graph { position: relative; overflow: hidden; background: linear-gradient(90deg, #282828 7px, #303030 7px); --sec: 194px; }
.navi { height: 11px; border: solid #000; border-width: 1px 0; background: linear-gradient(90deg, #2d8ceb 6px, #000 6px 7px, #676767 7px); border-radius: 7px 0 0 0; }
.ruler { display: flex; height: 20px; padding-left: 7px; background: #232323; border-bottom: 1px solid #000; }
.ruler span { width: var(--sec); flex: none; line-height: 15px; margin-left: -9px; margin-right: 9px; background: linear-gradient(#999, #999) 9px 100% / 1px 5px no-repeat; }
.ruler .zero { margin-left: -5px; margin-right: 5px; background-position: 5px 100%; }
.area { height: 16px; border-bottom: 1px solid #000; background: linear-gradient(90deg, #2d8ceb 6px, #000 6px 7px, #606060 7px); }
.cache { display: flex; height: 4px; padding-left: 7px; border-bottom: 1px solid #000; background: #232323; }
.cache i { width: calc(var(--frames) * var(--sec) / 25); background: #26b034; }
.cache .gap { background: #2c2622; }
.cache .rest { flex: 1; }
.track { height: 17px; margin-left: 7px; border-bottom: 1px solid #262626; background: #3e3e3e; display: flex; }
.track i { flex: 1; margin-left: calc(var(--start) * var(--sec) / 25); background: #437043; border: solid #4e634e; border-width: 1px 0; }
.track .r { background: #7a393b; border-color: #704244; }
.cti { position: absolute; top: 15px; bottom: 0; left: 7px; margin-left: calc(var(--start) * var(--sec) / 25 - 5px); width: 12px; background: linear-gradient(#2d72bb, #2d72bb) center / 1px 100% no-repeat; }
.cti svg { width: 12px; height: 14px; }

.foot { display: flex; align-items: center; height: 15px; color: #b4b4b4; }
.fl { width: 404px; display: flex; gap: 4px; padding-left: 7px; }
.fl svg { width: 14px; height: 14px; }
.toggle { width: 142px; height: 15px; border: 1px solid #333; border-bottom: 0; border-radius: 2px; background: #1f1f1f; color: #9a9a9a; line-height: 14px; }
.zoom { display: flex; align-items: center; gap: 10px; margin-left: 200px; }
.zoom input { width: 50px; height: 12px; background-size: 40px 2px; }
.zoom input::-webkit-slider-thumb { width: 10px; height: 10px; }
.zoom .s { width: 9px; height: 6px; }
.zoom .l { width: 16px; height: 10px; }
```
